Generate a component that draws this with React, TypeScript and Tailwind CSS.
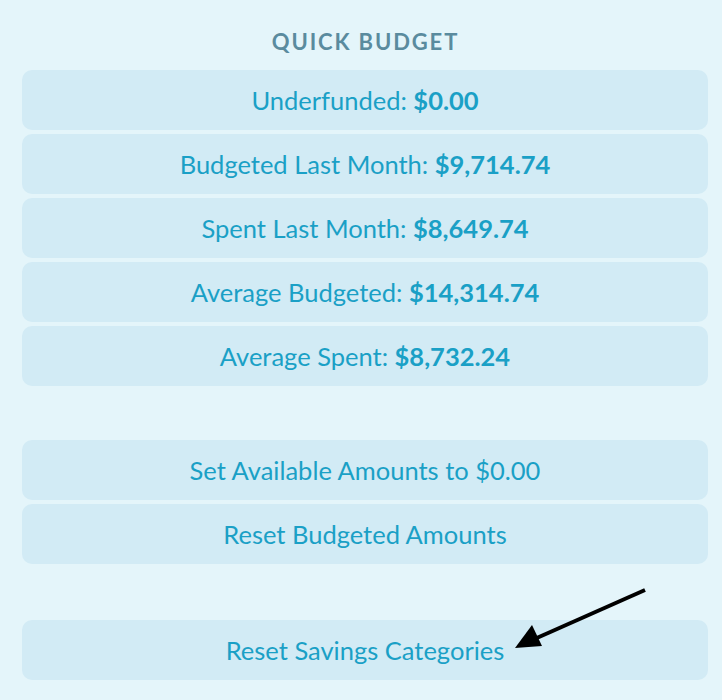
import React from "react";

const stats: [string, string][] = [
  ["Underfunded:", "$0.00"],
  ["Budgeted Last Month:", "$9,714.74"],
  ["Spent Last Month:", "$8,649.74"],
  ["Average Budgeted:", "$14,314.74"],
  ["Average Spent:", "$8,732.24"],
];

function Btn({ children }: { children: React.ReactNode }) {
  return (
    <div className="h-[60px] rounded-[10px] bg-[#d2ebf5] flex items-center justify-center text-[25.5px] text-[#1aa0c6]">
      {children}
    </div>
  );
}

export default function App() {
  return (
    <div
      className="relative w-[722px] h-[700px] bg-[#e4f5fa] px-[22px] pt-[26px]"
      style={{ fontFamily: "Lato, 'Open Sans', sans-serif" }}
    >
      <div className="h-[30px] pl-[9px] flex items-center justify-center text-[22px] font-bold tracking-[0.085em] text-[#5a8b9e]">
        QUICK BUDGET
      </div>
      <div className="mt-[14px] flex flex-col gap-[4px] w-[686px]">
        {stats.map(([l, v]) => (
          <Btn key={l}>
            <span>{l}&nbsp;</span>
            <span className="font-bold">{v}</span>
          </Btn>
        ))}
      </div>
      <div className="mt-[54px] flex flex-col gap-[4px] w-[686px]">
        <Btn>Set Available Amounts to $0.00</Btn>
        <Btn>Reset Budgeted Amounts</Btn>
      </div>
      <div className="mt-[56px] flex flex-col w-[686px]">
        <Btn>Reset Savings Categories</Btn>
      </div>
      <svg className="absolute left-0 top-0" width="722" height="700" viewBox="0 0 722 700">
        <line x1="645" y1="590" x2="530" y2="641" stroke="#000" strokeWidth="4" />
        <polygon points="515,648 532,625 542,646" fill="#000" />
      </svg>
    </div>
  );
}
